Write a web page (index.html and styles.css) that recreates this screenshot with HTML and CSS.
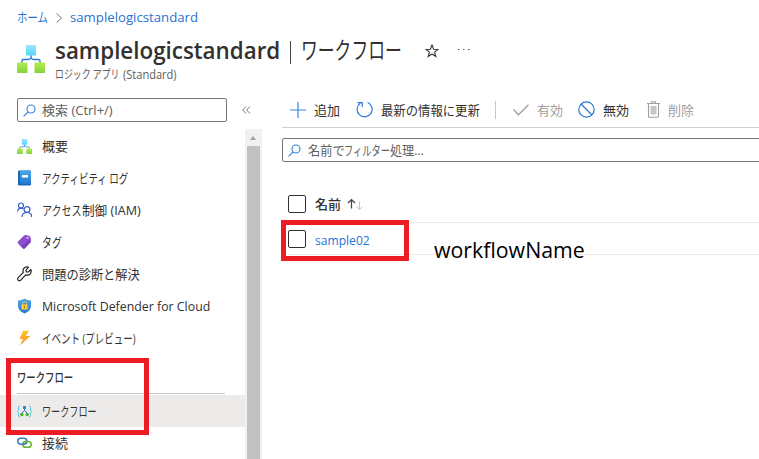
FILE: index.html
```html
<!DOCTYPE html>
<html lang="ja">
<head>
<meta charset="utf-8">
<title>samplelogicstandard | ワークフロー</title>
<link rel="stylesheet" href="styles.css">
</head>
<body>
<svg class="defs" width="0" height="0" aria-hidden="true">
  <defs>
    <linearGradient id="cyan" x1="0" y1="0" x2="0" y2="1"><stop offset="0" stop-color="#9ee5fb"/><stop offset="1" stop-color="#50d9fa"/></linearGradient>
    <linearGradient id="green" x1="0" y1="0" x2="0" y2="1"><stop offset="0" stop-color="#b4ec4d"/><stop offset="1" stop-color="#84d43e"/></linearGradient>
    <linearGradient id="blue" x1="0" y1="0" x2="0" y2="1"><stop offset="0" stop-color="#4fa8e8"/><stop offset="1" stop-color="#2378d0"/></linearGradient>
    <linearGradient id="bolt" x1="0" y1="0" x2="0" y2="1"><stop offset="0" stop-color="#ffc32b"/><stop offset="1" stop-color="#f78d1e"/></linearGradient>
    <symbol id="logic" viewBox="0 0 28 28">
      <path d="M14 10v4M5 18v-2q0-1.500 1.500-1.500h4q3.500 0 3.500-2.500q0 2.500 3.500 2.500h4q1.500 0 1.500 1.500v2" fill="none" stroke="#2877d2" stroke-width="1.300"/>
      <rect x="9" width="10" height="10.500" rx=".6" fill="url(#cyan)"/>
      <rect y="17.500" width="10.500" height="10.500" rx=".6" fill="url(#green)"/>
      <rect x="17.500" y="17.500" width="10.500" height="10.500" rx=".6" fill="url(#green)"/>
    </symbol>
    <symbol id="lens" viewBox="0 0 13 13"><circle cx="8" cy="5" r="4" fill="none" stroke="#2f7fd8" stroke-width="1.100"/><path d="M5.200 7.800L.6 12.400" stroke="#2f7fd8" stroke-width="1.200"/></symbol>
  </defs>
</svg>
<header>
  <nav class="crumbs">
    <a class="t-home">ホーム</a>
    <svg width="6" height="10" viewBox="0 0 6 10"><path d="M.5.5L5.500 5L.5 9.500" fill="none" stroke="#777"/></svg>
    <a class="t-res">samplelogicstandard</a>
  </nav>
  <div class="heading">
    <svg class="logo" width="28" height="28"><use href="#logic"/></svg>
    <div class="titles">
      <h1><b class="t-title">samplelogicstandard</b><i class="bar"></i><span class="t-flow">ワークフロー</span>
        <svg class="star" width="14" height="14" viewBox="0 0 14 14"><path d="M7 1L8.600 5.200L13 5.400L9.600 8.100L10.800 12.500L7 10L3.200 12.500L4.400 8.100L1 5.400L5.400 5.200Z" fill="none" stroke="#333" stroke-width="1.100"/></svg>
        <svg class="dots" width="12" height="2" viewBox="0 0 12 2"><path d="M0 .5h1.500M5 .5h1.500M10 .5h1.500" stroke="#555" stroke-width="1.200"/></svg>
      </h1>
      <p class="kind"><span class="t-kind-kana">ロジック アプリ</span><span class="t-kind-latin">(Standard)</span></p>
    </div>
  </div>
</header>
<div class="body">
  <aside>
    <div class="searchrow">
      <div class="search"><svg width="13" height="13"><use href="#lens"/></svg><span class="t-search">検索 (Ctrl+/)</span></div>
      <svg width="9" height="8" viewBox="0 0 9 8"><path d="M4 .5L.7 4L4 7.500M8 .5L4.700 4L8 7.500" fill="none" stroke="#666" stroke-width=".9"/></svg>
    </div>
    <div class="menuwrap">
      <div class="menu">
        <div class="item"><svg width="15" height="15"><use href="#logic"/></svg><span class="t-over">概要</span></div>
        <div class="item"><svg width="15" height="16" viewBox="0 0 15 16"><rect x="1" y=".5" width="13" height="15" rx="1.200" fill="#1b67b2"/><rect x="3" y=".5" width="11" height="13.500" rx="1" fill="url(#blue)"/><rect x="5" y="5" width="6" height="2.500" rx=".4" fill="#fff"/></svg><span class="t-act">アクティビティ ログ</span></div>
        <div class="item"><svg width="15" height="16" viewBox="0 0 15 16"><g fill="none" stroke="#315dcc" stroke-width="1.200"><circle cx="4" cy="3.500" r="2.500"/><circle cx="10" cy="7.500" r="2.900"/><path d="M.6 9.500Q1 6.200 4 6.200q1.500 0 2.500 1M5 15q0-4.500 5-4.500T14.500 15"/></g></svg><span class="t-iam-kana">アクセス</span><span class="t-iam">制御 (IAM)</span></div>
        <div class="item"><svg width="15" height="16" viewBox="0 0 15 16"><path d="M1 7.500L7 1.500Q8 .8 9.300 1.100L12.500 2q1 .4 1 1.500l.2 3.800q0 .8-.6 1.400L7.600 14.500q-.8.700-1.600 0L1 9.200q-.8-.9 0-1.700Z" fill="#8e4fca"/><path d="M1 9.200L6 14.500q.8.700 1.600 0L13.100 8.700q.6-.6.600-1.400L13.500 4L5 12.500Z" fill="#7a3fbd"/><circle cx="10.600" cy="3.800" r="1.100" fill="#dbc1f4"/></svg><span class="t-tag">タグ</span></div>
        <div class="item"><svg width="15" height="16" viewBox="0 0 15 16"><path d="M13.900 3.500L11.300 6L9.200 5.800L9 3.800L11.500 1.200Q8.500.2 6.800 2.300Q5.500 4 6.300 6.300L1 11.900Q.2 13 1.200 14.200Q2.400 15.200 3.500 14.300L8.700 8.900Q11.500 9.700 13.300 7.800Q14.700 5.900 13.900 3.500Z" fill="#fff" stroke="#222" stroke-width="1.200" stroke-linejoin="round"/></svg><span class="t-diag">問題の診断と解決</span></div>
        <div class="item"><svg width="15" height="16" viewBox="0 0 15 16"><path d="M7.500.5Q10 2.500 14 2.600V8Q14 12.500 7.500 15.500Q1 12.500 1 8V2.600Q5 2.500 7.500.5Z" fill="url(#blue)"/><path d="M5.700 7V5.500a1.800 1.800 0 0 1 3.600 0V7" fill="none" stroke="#f5cb43"/><rect x="4.300" y="6.500" width="6.400" height="5" rx=".6" fill="#fbc72e"/><path d="M7.500 8v2" stroke="#a36b14"/></svg><span class="t-def">Microsoft Defender for Cloud</span></div>
        <div class="item"><svg width="15" height="16" viewBox="0 0 15 16"><path d="M6 .8h6L8.600 6h4.900L3 15.300L6 9H2.500Z" fill="url(#bolt)"/></svg><span class="t-event">イベント (プレビュー)</span></div>
        <div class="section"><span class="t-sec">ワークフロー</span></div>
        <div class="item active"><svg width="15" height="15" viewBox="0 0 15 15"><path d="M3 2Q1.500 2 1.500 3.500V6L.4 7.500L1.500 9v2.500Q1.500 13 3 13M12 2q1.500 0 1.500 1.500V6l1.100 1.500L13.500 9v2.500Q13.500 13 12 13" fill="none" stroke="#50bfe8"/><path d="M7.500 4v2.500L4.800 9M7.500 6.500L10.200 9" fill="none" stroke="#2877d2"/><rect x="6" y="2" width="3" height="3" rx="1" fill="#277bd2"/><circle cx="4.800" cy="10.500" r="1.700" fill="#57ad32"/><circle cx="10.200" cy="10.500" r="1.700" fill="#57ad32"/></svg><span class="t-wf">ワークフロー</span></div>
        <div class="item"><svg width="15" height="12" viewBox="0 0 15 12"><g fill="none" stroke-width="1.500"><rect x="5.800" y="4.500" width="8.400" height="5.800" rx="2.900" stroke="#68b436"/><rect x=".8" y="1.200" width="9" height="6" rx="3" stroke="#367ac1"/><path d="M6.300 6.200Q7 4.500 8.600 4.500H10" stroke="#68b436"/></g></svg><span class="t-conn">接続</span></div>
      </div>
      <div class="scrollbar"><i class="arrow"></i><i class="thumb"></i></div>
      <div class="mark mark-menu"></div>
    </div>
  </aside>
  <main>
    <div class="toolbar">
      <svg width="16" height="16" viewBox="0 0 16 16"><path d="M8 0v16M0 8h16" stroke="#3b86da" stroke-width="1.200"/></svg><span class="t-add">追加</span>
      <svg class="refresh" width="17" height="17" viewBox="0 0 17 17"><path d="M11.700 1.500A7.500 7.500 0 1 1 4.300 2.200M1.500 1.700h4.700V6" fill="none" stroke="#2878d4" stroke-width="1.200"/></svg><span class="t-ref">最新の情報に更新</span>
      <i class="sep"></i>
      <svg width="16" height="12" viewBox="0 0 16 12"><path d="M.5 5.500L5.500 10.800L15.500.8" fill="none" stroke="#a19f9d" stroke-width="1.300"/></svg><span class="t-en off">有効</span>
      <svg class="ban" width="17" height="17" viewBox="0 0 17 17"><circle cx="8.500" cy="8.500" r="7.700" fill="none" stroke="#2878d4" stroke-width="1.200"/><path d="M3 3L14 14" stroke="#2878d4" stroke-width="1.200"/></svg><span class="t-dis">無効</span>
      <svg class="bin" width="13" height="17" viewBox="0 0 13 17"><path d="M0 2.500h13M4.500 2.500V.8h4v1.700M1.500 2.500V15.200q0 1 1 1h8q1 0 1-1V2.500" fill="none" stroke="#a19f9d" stroke-width="1.100"/><rect x="3.500" y="5" width="6" height="8.500" fill="#c8c6c4"/></svg><span class="t-del off">削除</span>
    </div>
    <div class="filter"><svg width="13" height="13"><use href="#lens"/></svg><span class="t-filter">名前で</span><span class="t-filter-kana">フィルター</span><span class="t-filter-end">処理...</span></div>
    <div class="table">
      <div class="row head"><i class="check"></i><span class="t-name">名前</span><svg width="17" height="13" viewBox="0 0 17 13"><path d="M4.500 10.500V1.500M1 5L4.500 1.500L8 5" fill="none" stroke="#444" stroke-width="1.200"/><path d="M12.500 3.500v8M9.500 8.500l3 3l3-3" fill="none" stroke="#c4c4c4"/></svg></div>
      <div class="row"><i class="check"></i><a class="t-sample">sample02</a></div>
      <div class="mark mark-row"></div>
      <span class="note">workflowName</span>
    </div>
  </main>
</div>
</body>
</html>
```
FILE: styles.css
```css
* { box-sizing: border-box; }
html, body { margin: 0; height: 459px; overflow: hidden; }
body {
  width: 759px;
  background: #fff;
  color: #323130;
  font-family: "Open Sans", "Noto Sans CJK JP", sans-serif;
  font-size: 13px;
  line-height: 20px;
}
.defs { position: absolute; }
svg { display: block; flex: none; }
i { display: block; flex: none; font-style: normal; }
span, a, b { white-space: nowrap; flex: none; transform-origin: 0 50%; }
a { color: #2872d3; }

header { height: 98px; }
.crumbs { display: flex; align-items: center; height: 34px; padding-left: 17px; }
.crumbs svg { margin: 2px 8px 0 8px; }
.heading { display: flex; padding-left: 17px; }
.logo { margin: 11px 10px 0 0; }
h1 { display: flex; align-items: center; height: 32px; margin: 0; font-size: 24px; font-weight: 400; line-height: 32px; }
h1 b { width: 226px; font-weight: 600; }
.bar { width: 1px; height: 23px; margin: 4px 10px 0 9px; background: #444; }
.star { margin: 2px 19px 0 24px; }
.kind { display: flex; height: 18px; margin: 0; font-size: 12px; line-height: 18px; color: #605e5c; }

/* condensed kana and UI text widths */
.t-home { width: 31px; transform: scaleX(.8); }
.t-res { transform: scaleX(1.015); }
.t-title { transform: scaleX(.932); }
.t-flow { width: 100px; transform: scaleX(.7); }
.t-kind-kana { width: 68px; transform: scaleX(.74); }
.t-kind-latin { transform: scaleX(.92); }
.t-act { transform: scaleX(.73); }
.t-iam-kana { width: 40px; transform: scaleX(.77); }
.t-iam { transform: scaleX(.97); }
.t-tag { transform: scaleX(.76); }
.t-diag { transform: scaleX(.94); }
.t-def { transform: scaleX(.95); }
.t-event { transform: scaleX(.73); }
.t-sec { transform: scaleX(.72); }
.t-wf { transform: scaleX(.7); }
.t-ref { width: 98px; transform: scaleX(.95); }
.t-filter { width: 36px; transform: scaleX(.94); }
.t-filter-kana { width: 46px; transform: scaleX(.71); }
.t-filter-end { transform: scaleX(.93); }
.t-sample { transform: scaleX(.93); }

.body { display: flex; height: 361px; }
aside { width: 262px; flex: none; }
.searchrow { display: flex; align-items: center; height: 31px; padding: 0 0 7px 17px; }
.search { display: flex; align-items: center; width: 210px; height: 24px; margin-right: 15px; padding-left: 5px; border: 1px solid #777; border-radius: 2px; }
.search span { margin-left: 6px; color: #605e5c; }
.menuwrap { position: relative; display: flex; height: 330px; }
.menu { width: 245px; padding-top: 1px; }
.item { display: flex; align-items: center; height: 32px; padding-left: 17px; }
.item svg + span { margin-left: 10px; }
.section { height: 41px; padding: 13px 20px 0 17px; }
.section span { display: block; width: 78px; height: 27px; font-weight: 500; }
.section::after { content: ""; display: block; height: 1px; margin-top: -1px; background: #c8c6c4; }
.active { background: #edebe9; }
.scrollbar { width: 17px; background: #f1f1f1; padding: 7px 2px 0; }
.arrow { width: 0; height: 0; margin-left: 3px; border: solid transparent; border-width: 0 3.5px 4px; border-bottom-color: #a3a3a3; }
.thumb { height: 320px; margin-top: 6px; background: #c1c1c1; }

main { width: 477px; margin-left: 20px; }
.toolbar { display: flex; align-items: center; height: 30px; padding: 0 0 6px 8px; border-bottom: 1px solid #d2d0ce; }
.toolbar span { margin-left: 8px; color: #323130; }
.toolbar .off { color: #a19f9d; }
.toolbar .t-en { margin-right: -1px; }
.sep { width: 1px; height: 18px; margin: 0 17px 0 16px; background: #c8c6c4; }
.refresh, .ban { margin-left: 16px; }
.bin { margin-left: 18px; }
.filter { display: flex; align-items: center; height: 24px; margin: 10px -4px 0 0; padding-left: 5px; border: 1px solid #777; border-radius: 2px; }
.filter span { color: #605e5c; }
.filter svg + span { margin-left: 7px; }
.table { position: relative; }
.row { display: flex; align-items: center; height: 32px; padding-left: 6px; border-bottom: 1px solid #edebe9; }
.row.head { height: 61px; padding-top: 24px; }
.row span { margin-left: 9px; font-weight: 500; }
.row svg { margin-left: 6px; }
.row a { margin-left: 9px; padding-top: 3px; }
.check { width: 18px; height: 18px; border: 1px solid #323130; border-radius: 2px; }
.mark { position: absolute; border: 5px solid #ed1c24; }
.mark-menu { left: 6px; top: 229px; width: 143px; height: 77px; }
.mark-row { left: -1px; top: 58px; width: 128px; height: 41px; }
.note { position: absolute; left: 152px; top: 76px; font-size: 21px; line-height: 24px; color: #000; transform: scaleX(1.015); }
```
